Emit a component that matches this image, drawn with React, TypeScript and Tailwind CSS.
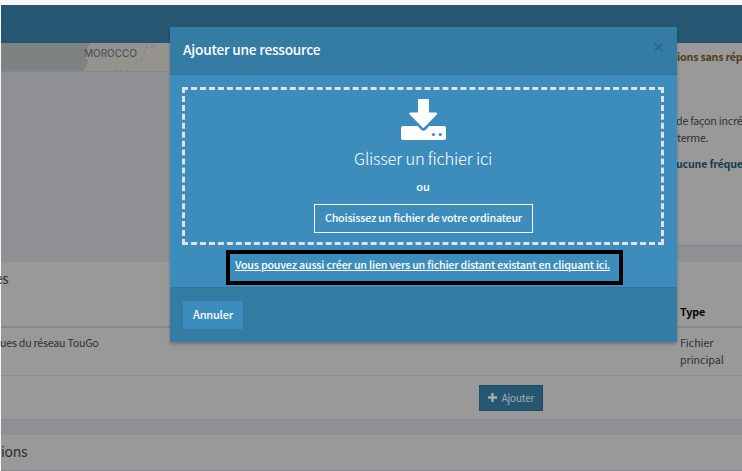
import React from 'react';

function MapStrip() {
  return (
    <svg className="block h-7 w-full" viewBox="0 0 600 28" preserveAspectRatio="none">
      <rect width="600" height="28" fill="#7f8282" />
      <path d="M89 0L86 6L83 10L84 15L87 17L86 23L82 28H600V0Z" fill="#94938e" />
      <path d="M153 3L145 4L143 10L146 12L144 15L137 18L131 24L126 27.5H109" fill="none" stroke="#8b7a7c" strokeWidth="1" strokeDasharray="3 3" />
    </svg>
  );
}

function DownloadIcon() {
  return (
    <svg className="block h-[41px] w-[45px]" viewBox="0 0 45 41">
      <rect x="0" y="27" width="45" height="14" rx="2" fill="#fff" />
      <path d="M11 17L20 28.5Q22.4 32.5 25 28.5L34 17Z" fill="#3c8dbc" stroke="#3c8dbc" strokeWidth="3" strokeLinejoin="round" />
      <path d="M18 0H27Q28 0 28 1V13.5H35.3Q37 14 35.8 15.6L22.4 29.3L8.7 15.6Q7.5 14 9.2 13.5H17V1Q17 0 18 0Z" fill="#fff" />
      <circle cx="32.5" cy="35.5" r="1.6" fill="#3c8dbc" />
      <circle cx="39.3" cy="35.5" r="1.6" fill="#3c8dbc" />
    </svg>
  );
}

function Dialog() {
  return (
    <section className="absolute left-[170px] top-[27px] flex h-[315px] w-[507px] flex-col bg-[#3c8dbc] text-white shadow-[0_2px_3px_rgba(0,0,0,0.25)]">
      <header className="flex h-12 shrink-0 items-center justify-between border-b border-[#34749b] bg-[#357ca5] pl-[13px] pr-[13px]">
        <h1 className="pb-[3px] text-[13.7px] font-medium leading-5 tracking-[-0.22px]">Ajouter une ressource</h1>
        <span className="relative left-[1px] pb-[8px] text-[13px] font-bold leading-5 text-[#2b6485]">×</span>
      </header>
      <div className="flex grow flex-col items-center pl-3 pr-[13px] pt-3">
        <div className="flex h-[158px] w-full flex-col items-center border-[3px] border-dashed border-[#dfe0e8] pt-[9px]">
          <DownloadIcon />
          <p className="mt-[6px] text-[16.5px] font-light leading-6 tracking-[-0.22px]">Glisser un fichier ici</p>
          <p className="mt-[8px] text-[11px] font-medium leading-4">ou</p>
          <button className="mr-[-1px] mt-[10px] h-[29px] w-[219px] whitespace-nowrap border border-white pb-[1px] text-[10.7px] font-medium leading-4 tracking-[-0.18px]">Choisissez un fichier de votre ordinateur</button>
        </div>
        <div className="mr-[-3px] mt-[5px] flex h-[35px] w-[397px] shrink-0 justify-start border-4 border-black pl-[5px] pt-[3px]">
          <a className="whitespace-nowrap text-[10.7px] font-medium leading-4 tracking-[-0.19px] underline">Vous pouvez aussi créer un lien vers un fichier distant existant en cliquant ici.</a>
        </div>
      </div>
      <footer className="h-[55px] shrink-0 border-t border-[#34749b] bg-[#357ca5] pl-[13px] pt-[13px]">
        <button className="block h-7 w-[60px] bg-[#3c8dbc] pb-[2px] text-[11px] font-medium tracking-[-0.2px]">Annuler</button>
      </footer>
    </section>
  );
}

export default function App() {
  return (
    <main className="relative h-[471px] w-[742px] overflow-hidden bg-[#f6f6f6] pl-px pt-[5px] font-['Noto_Sans_CJK_SC',sans-serif] text-[#303030]">
      <div className="h-[38px] bg-[#265772]" />
      <div className="flex h-[219px] bg-[#8e9094]">
        <div className="w-[600px] shrink-0">
          <MapStrip />
          <div className="h-px bg-[#858789]" />
        </div>
        <aside className="h-[203px] w-[141px] shrink-0 whitespace-nowrap border-b border-[#85878c] bg-[#999] pl-[76px] text-[10.7px] leading-[17px] tracking-[-0.22px]">
          <p className="pt-[5px] font-bold text-[#503b20]">ions sans rép</p>
          <p className="-ml-px mt-[47px]">de façon incré</p>
          <p>terme.</p>
          <p className="-ml-px mt-[9px] font-bold text-[#183d50]">ucune fréque</p>
        </aside>
      </div>
      <section className="h-[158px] border-b border-[#85898b] bg-[#999] text-[10.7px] tracking-[-0.25px]">
        <div className="flex h-[66px] justify-between border-b-2 border-[#858789]">
          <h2 className="-ml-[6px] pt-[6px] text-[13.5px] leading-5">es</h2>
          <strong className="w-[62px] pt-[41px] leading-[17px] text-black tracking-[-0.1px]">Type</strong>
        </div>
        <div className="flex h-12 justify-between border-b border-[#8c8e8f] pt-[6px] leading-[17px]">
          <span className="-ml-px">ues du réseau TouGo</span>
          <span className="w-[62px] tracking-[-0.05px]">Fichier<br />principal</span>
        </div>
        <div className="pl-[478px] pt-[9px]">
          <button className="flex h-[26px] w-[64px] items-center justify-center gap-[5px] border border-[#204d66] bg-[#265772] pb-[2px] text-[10px] tracking-[-0.2px] text-[#a8adb0]">
            <svg className="h-[9px] w-[9px]" viewBox="0 0 9 9"><path d="M4.5 0V9M0 4.5H9" stroke="currentColor" strokeWidth="2.5" /></svg>
            Ajouter
          </button>
        </div>
      </section>
      <div className="h-[15px] bg-[#8e9094]" />
      <section className="h-9 border-b border-[#85878c] bg-[#999]">
        <h2 className="pt-[6px] text-[14px] leading-5 tracking-[-0.3px]">ions</h2>
      </section>
      <span className="absolute left-[84px] top-[46px] text-[10px] font-medium leading-[14px] tracking-[-0.05px] text-[#4e5660] font-['Inter',sans-serif]">MOROCCO</span>
      <Dialog />
    </main>
  );
}
